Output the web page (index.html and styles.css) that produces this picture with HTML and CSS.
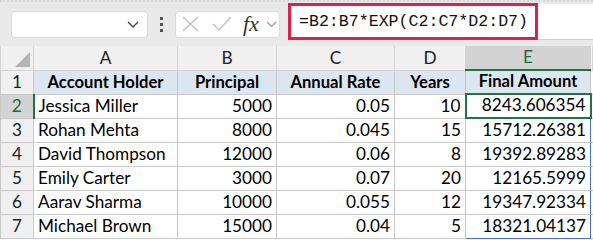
FILE: index.html
```html
<!DOCTYPE html>
<html lang="en">
<head>
    <meta charset="UTF-8">
    <title>Compound interest sheet</title>
    <link rel="stylesheet" href="styles.css">
</head>
<body>
    <div class="toolbar">
        <div class="name-box">
            <svg class="chev" width="12" height="7" viewBox="0 0 12 7"><path d="M1 1l5 5 5-5" fill="none" stroke="#444" stroke-width="1.4"/></svg>
        </div>
        <div class="grip"><span></span><span></span><span></span></div>
        <div class="fx-box">
            <svg width="19" height="18" viewBox="0 0 19 18"><path d="M2 2l15 14M17 2L2 16" stroke="#bbb" stroke-width="1.2"/></svg>
            <svg class="ok" width="20" height="16" viewBox="0 0 20 16"><path d="M1 8l6 6L19 1" fill="none" stroke="#bbb" stroke-width="1.2"/></svg>
            <span class="fx">fx</span>
            <svg width="11" height="7" viewBox="0 0 11 7"><path d="M1 1l4.5 4.5L10 1" fill="none" stroke="#999" stroke-width="1.2"/></svg>
        </div>
        <div class="formula-bar">
            <span class="formula">=B2:B7*EXP(C2:C7*D2:D7)</span>
        </div>
    </div>

    <table class="sheet">
        <colgroup>
            <col class="c-hd"><col class="c-a"><col class="c-b"><col class="c-c"><col class="c-d"><col class="c-e"><col>
        </colgroup>
        <tr class="col-heads">
            <th class="corner"><span class="tri"></span></th>
            <th>A</th><th>B</th><th>C</th><th>D</th><th class="sel">E</th><th></th>
        </tr>
        <tr class="title-row">
            <th class="rn">1</th>
            <td>Account Holder</td><td>Principal</td><td>Annual Rate</td><td>Years</td><td>Final Amount</td><td class="blank"></td>
        </tr>
        <tr>
            <th class="rn sel">2</th>
            <td class="txt">Jessica Miller</td><td>5000</td><td>0.05</td><td>10</td><td class="active">8243.606354</td><td class="blank"></td>
        </tr>
        <tr>
            <th class="rn">3</th>
            <td class="txt">Rohan Mehta</td><td>8000</td><td>0.045</td><td>15</td><td class="spill">15712.26381</td><td class="blank"></td>
        </tr>
        <tr>
            <th class="rn">4</th>
            <td class="txt">David Thompson</td><td>12000</td><td>0.06</td><td>8</td><td class="spill">19392.89283</td><td class="blank"></td>
        </tr>
        <tr>
            <th class="rn">5</th>
            <td class="txt">Emily Carter</td><td>3000</td><td>0.07</td><td>20</td><td class="spill">12165.5999</td><td class="blank"></td>
        </tr>
        <tr>
            <th class="rn">6</th>
            <td class="txt">Aarav Sharma</td><td>10000</td><td>0.055</td><td>12</td><td class="spill">19347.92334</td><td class="blank"></td>
        </tr>
        <tr>
            <th class="rn">7</th>
            <td class="txt">Michael Brown</td><td>15000</td><td>0.04</td><td>5</td><td class="spill last">18321.04137</td><td class="blank"></td>
        </tr>
    </table>
</body>
</html>
```

FILE: styles.css
```css
* {
    margin: 0;
    padding: 0;
    box-sizing: border-box;
}
body {
    width: 593px;
    height: 240px;
    overflow: hidden;
    background: #fff;
    font-family: Lato, "Liberation Sans", sans-serif;
    color: #000;
}

/* formula bar strip */
.toolbar {
    height: 46px;
    display: flex;
    align-items: center;
    background: #e9e9e9;
    padding-left: 11px;
    border-top: 2px dotted #d6d6d6;
}
.name-box {
    width: 137px;
    height: 27px;
    background: #fff;
    border: 1px solid #dcdcdc;
    border-radius: 4px;
    display: flex;
    align-items: center;
    justify-content: flex-end;
    padding-right: 8px;
}
.grip {
    width: 27px;
    display: flex;
    flex-direction: column;
    align-items: center;
    gap: 3px;
}
.grip span {
    width: 3px;
    height: 3px;
    background: #555;
}
.fx-box {
    width: 105px;
    height: 27px;
    background: #fff;
    border: 1px solid #dcdcdc;
    border-radius: 4px;
    display: flex;
    align-items: center;
    gap: 9px;
    padding-left: 5px;
}
.fx-box .ok {
    margin-left: 3px;
}
.fx {
    font-family: "Liberation Serif", serif;
    font-style: italic;
    font-size: 22px;
    line-height: 22px;
    color: #333;
    margin-left: 2px;
    margin-right: -2px;
}
.formula-bar {
    flex: 1;
    align-self: flex-start;
    margin-top: 2px;
    margin-left: 8px;
    height: 36px;
    background: #fff;
    border-bottom: 1px solid #cfcfcf;
}
.formula {
    display: inline-block;
    width: 250px;
    height: 37px;
    margin-top: -1px;
    border: 3px solid #df1f4b;
    font-family: "Liberation Mono", monospace;
    font-size: 16.6px;
    line-height: 31px;
    padding-left: 8px;
    color: #111;
}

/* grid */
.sheet {
    table-layout: fixed;
    border-collapse: collapse;
    width: 593px;
}
.c-hd { width: 33px; }
.c-a { width: 144px; }
.c-b { width: 99px; }
.c-c { width: 118px; }
.c-d { width: 71px; }
.c-e { width: 125px; }

.sheet th,
.sheet td {
    height: 24px;
    border: 1px solid #c8c8c8;
    font-size: 17.2px;
    line-height: 20px;
    white-space: nowrap;
    overflow: hidden;
    vertical-align: bottom;
    padding: 0 4px 2px;
}
.col-heads th {
    background: #f0f0f0;
    font-weight: normal;
    color: #222;
    border-color: #d4d4d4;
    border-top: none;
}
.corner {
    position: relative;
}
.tri {
    position: absolute;
    right: 3px;
    bottom: 3px;
    width: 0;
    height: 0;
    border-left: 15px solid transparent;
    border-bottom: 15px solid #b4b4b4;
}
.col-heads th.sel {
    background: #d3d3d3;
    color: #1d6b3e;
    border-bottom: 2px solid #217346;
}
.rn {
    background: #f0f0f0;
    font-weight: normal;
    color: #222;
    border-color: #d4d4d4;
    text-align: center;
}
.sheet .rn {
    padding: 0 0 2px;
}
.rn.sel {
    background: #d3d3d3;
    color: #1d6b3e;
    border-right: 2px solid #217346;
}
.sheet td {
    text-align: right;
}
.sheet td.txt {
    text-align: left;
}
.title-row td {
    background: #dce6f1;
    font-weight: bold;
    font-size: 16.6px;
    text-align: center;
}
.sheet td.blank {
    border-right: none;
    background: #fff;
}
td.active {
    border: 2px solid #217346;
}
td.spill {
    border-left: 1px solid #4472c4;
    border-right: 1px solid #4472c4;
}
td.spill.last {
    border-bottom: 1px solid #4472c4;
}
```
